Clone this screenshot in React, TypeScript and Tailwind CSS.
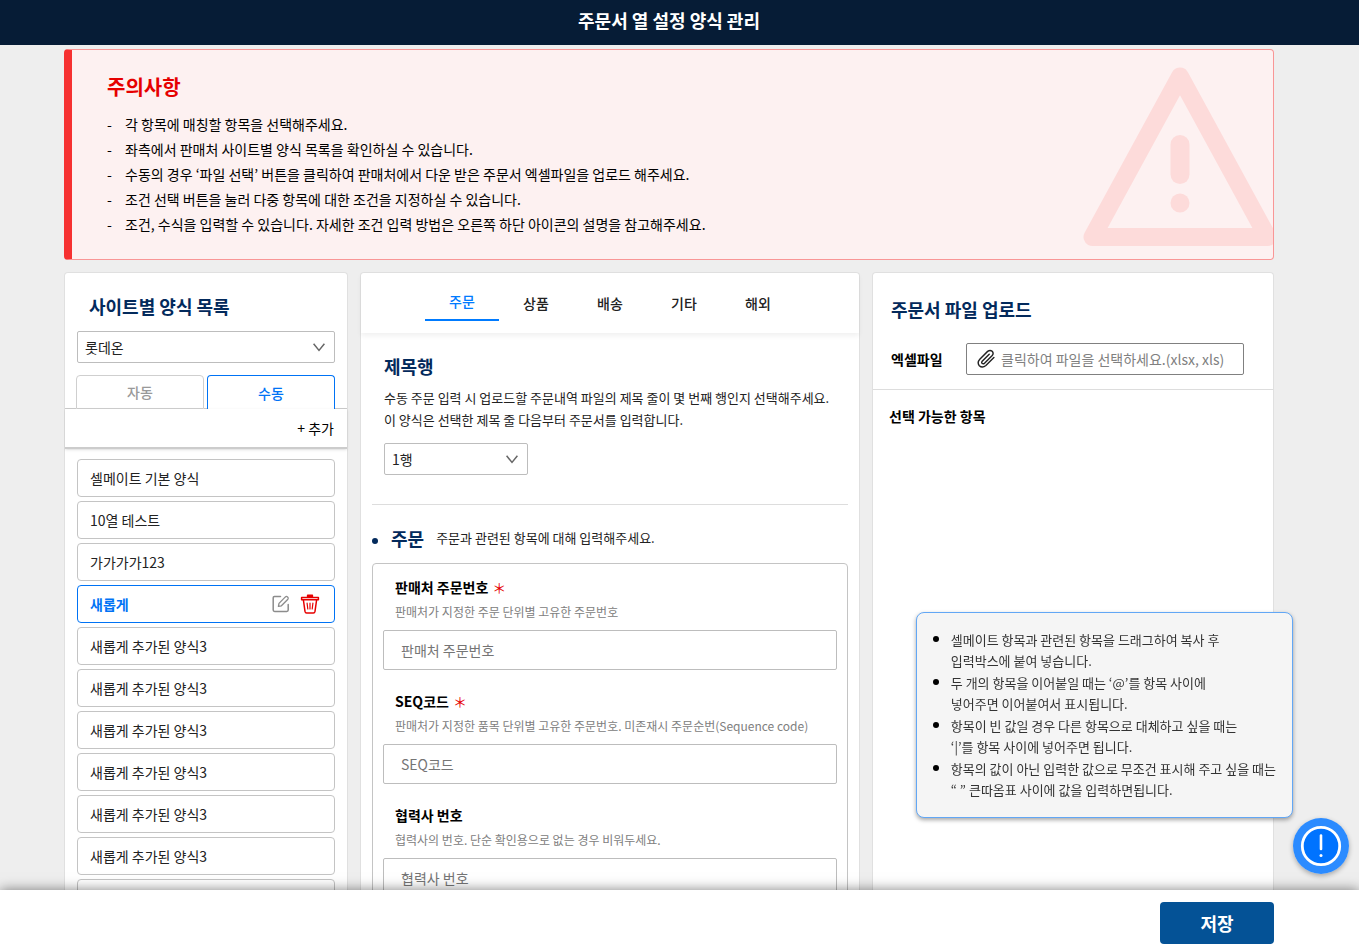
import React from "react";

const notices = [
  "각 항목에 매칭할 항목을 선택해주세요.",
  "좌측에서 판매처 사이트별 양식 목록을 확인하실 수 있습니다.",
  "수동의 경우 ‘파일 선택’ 버튼을 클릭하여 판매처에서 다운 받은 주문서 엑셀파일을 업로드 해주세요.",
  "조건 선택 버튼을 눌러 다중 항목에 대한 조건을 지정하실 수 있습니다.",
  "조건, 수식을 입력할 수 있습니다. 자세한 조건 입력 방법은 오른쪽 하단 아이콘의 설명을 참고해주세요.",
];

const templates = [
  "셀메이트 기본 양식",
  "10열 테스트",
  "가가가가123",
  "새롭게",
  "새롭게 추가된 양식3",
  "새롭게 추가된 양식3",
  "새롭게 추가된 양식3",
  "새롭게 추가된 양식3",
  "새롭게 추가된 양식3",
  "새롭게 추가된 양식3",
  "새롭게 추가된 양식3",
];

const categories = ["주문", "상품", "배송", "기타", "해외"];

const fields = [
  { id: "order-no", label: "판매처 주문번호", required: true, hint: "판매처가 지정한 주문 단위별 고유한 주문번호" },
  { id: "seq", label: "SEQ코드", required: true, hint: "판매처가 지정한 품목 단위별 고유한 주문번호. 미존재시 주문순번(Sequence code)" },
  { id: "partner-no", label: "협력사 번호", required: false, hint: "협력사의 번호. 단순 확인용으로 없는 경우 비워두세요." },
];

const tips = [
  ["셀메이트 항목과 관련된 항목을 드래그하여 복사 후", "입력박스에 붙여 넣습니다."],
  ["두 개의 항목을 이어붙일 때는 ‘@’를 항목 사이에", "넣어주면 이어붙여서 표시됩니다."],
  ["항목이 빈 값일 경우 다른 항목으로 대체하고 싶을 때는", "‘|’를 항목 사이에 넣어주면 됩니다."],
  ["항목의 값이 아닌 입력한 값으로 무조건 표시해 주고 싶을 때는", "“ ” 큰따옴표 사이에 값을 입력하면됩니다."],
];

function WarningIcon() {
  return (
    <svg width="196" height="182" viewBox="0 0 196 182" fill="none" stroke="#fddbda" aria-hidden="true">
      <path d="M98 10.5 L10.5 171 H185.5 Z" strokeWidth="18" strokeLinejoin="round" />
      <path d="M98 78.5 V108.5" strokeWidth="19" strokeLinecap="round" />
      <circle cx="98" cy="137" r="9.5" fill="#fddbda" stroke="none" />
    </svg>
  );
}

function EditIcon() {
  return (
    <svg width="18" height="18" viewBox="0 0 18 18" fill="none" stroke="#8c8c8c" strokeWidth="1.5" strokeLinejoin="round" strokeLinecap="round" aria-hidden="true">
      <path d="M8.5 1.6 H2.4 Q1.2 1.6 1.2 2.8 V15 Q1.2 16.4 2.6 16.4 H14.8 Q16.2 16.4 16.2 15 V9.5" />
      <path d="M6.4 11.4 L7 8.4 L13.4 1.9 Q14.4 1 15.6 1.9 Q16.8 3 15.9 4.2 L9.4 10.8 Z" strokeWidth="1.3" />
    </svg>
  );
}

function TrashIcon() {
  return (
    <svg width="20" height="20" viewBox="0 0 20 20" fill="none" stroke="#e60000" strokeWidth="1.5" strokeLinejoin="round" strokeLinecap="round" aria-hidden="true">
      <path d="M1.6 3.4 H18.4 V5.8 H1.6 Z" />
      <path d="M7.6 3 V1.2 H12.4 V3" fill="#e60000" />
      <path d="M3.4 6 L5 17.4 Q5.3 19 6.6 19 H13.4 Q14.7 19 15 17.4 L16.6 6" />
      <path d="M7.1 9.2 L7.8 15 M10 9.2 V15 M12.9 9.2 L12.2 15" strokeWidth="1.2" />
    </svg>
  );
}

function ClipIcon() {
  return (
    <svg width="20" height="20" viewBox="0 0 20 20" fill="none" stroke="#222222" strokeWidth="1.4" strokeLinecap="round" aria-hidden="true">
      <path d="M13.2 5.2 L6.2 12.2 Q5.2 13.6 6.2 14.5 Q7.3 15.3 8.5 14.2 L16.2 6.5 Q18 4.4 16.2 2.3 Q14.1 0.5 11.6 2.4 L3.8 10.2 Q0.8 13.6 3.3 16.7 Q6.3 19.4 9.9 16.5 L17.9 8.5" />
    </svg>
  );
}

function Dropdown({ label, value }: { label: string; value: string }) {
  return (
    <div className="relative">
      <select
        aria-label={label}
        defaultValue={value}
        className="block h-8 w-full appearance-none rounded-xs border border-[#bdbdbd] bg-white px-[7px] text-sm text-[#222222]"
      >
        <option>{value}</option>
      </select>
      <svg className="pointer-events-none absolute top-3 right-[10px]" width="12" height="9" viewBox="0 0 12 9" fill="none" stroke="#666666" strokeWidth="1.5" aria-hidden="true">
        <path d="M0.6 0.8 L6 7.4 L11.4 0.8" />
      </svg>
    </div>
  );
}

function TemplatePanel() {
  return (
    <aside className="flex w-[284px] shrink-0 flex-col rounded-t border border-b-0 border-[#e0e0e0] bg-white">
      <h2 className="px-6 pt-[18px] pb-[10px] text-lg leading-[30px] font-bold text-[#032a5c]">사이트별 양식 목록</h2>
      <div className="px-3">
        <Dropdown label="판매처 사이트" value="롯데온" />
      </div>
      <div className="mt-3 flex h-[34px] shrink-0 items-stretch">
        <span className="w-[11px] border-b border-[#cccccc]" />
        <button className="flex-1 rounded-t border border-[#cfcfcf] text-sm font-medium text-[#999999]">자동</button>
        <span className="w-[3px] border-b border-[#cccccc]" />
        <button className="flex-1 rounded-t border border-b-0 border-[#0073f5] text-sm font-medium text-[#0073f5]">수동</button>
        <span className="w-3 border-b border-[#cccccc]" />
      </div>
      <div className="flex h-10 shrink-0 items-center justify-end border-b-2 border-[#cccccc] px-[13px] shadow-sm">
        <button className="text-sm text-black">+ 추가</button>
      </div>
      <ul className="flex flex-col gap-1 px-3 pt-[10px]">
        {templates.map((name, i) =>
          i === 3 ? (
            <li key={i} className="flex h-[38px] shrink-0 items-center rounded border border-[#0073f5] pr-[14px]">
              <button className="h-full flex-1 px-3 text-left text-sm font-bold text-[#0073f5]">{name}</button>
              <button aria-label="수정" className="mr-[10px]">
                <EditIcon />
              </button>
              <button aria-label="삭제">
                <TrashIcon />
              </button>
            </li>
          ) : (
            <li key={i} className="flex h-[38px] shrink-0 rounded border border-[#c4c4c4]">
              <button className="flex-1 px-3 text-left text-sm text-[#222222]">{name}</button>
            </li>
          )
        )}
      </ul>
    </aside>
  );
}

function OrderPanel() {
  return (
    <main className="flex min-w-0 flex-1 flex-col rounded-t border border-b-0 border-[#e0e0e0] bg-white">
      <nav className="flex h-[60px] shrink-0 items-center justify-center shadow-[0_3px_5px_rgba(0,0,0,0.06)]">
        {categories.map((name, i) =>
          i === 0 ? (
            <button key={name} className="h-9 w-[74px] border-b-2 border-[#007bff] pb-[2px] text-sm font-medium text-[#007bff]">
              {name}
            </button>
          ) : (
            <button key={name} className="h-9 w-[74px] text-sm font-medium text-[#222222]">
              {name}
            </button>
          )
        )}
      </nav>
      <section className="mx-[11px] border-b border-[#dddddd] px-3 pt-[19px] pb-[29px]">
        <h2 className="text-lg leading-[28px] font-bold text-[#032a5c]">제목행</h2>
        <p className="mt-[7px] text-[13px] leading-[22px] text-[#222222]">
          수동 주문 입력 시 업로드할 주문내역 파일의 제목 줄이 몇 번째 행인지 선택해주세요.
          <br />이 양식은 선택한 제목 줄 다음부터 주문서를 입력합니다.
        </p>
        <div className="mt-3 w-36">
          <Dropdown label="제목행" value="1행" />
        </div>
      </section>
      <section className="mx-[11px] pt-[19px]">
        <div className="flex h-[39px] items-start">
          <span className="mt-[14px] size-[6px] rounded-full bg-[#032a5c]" />
          <h2 className="ml-[13px] text-lg leading-[28px] font-bold text-[#032a5c]">주문</h2>
          <p className="ml-3 text-[13px] leading-[28px] text-[#222222]">주문과 관련된 항목에 대해 입력해주세요.</p>
        </div>
        <div className="rounded-t border border-[#c4c4c4] px-[10px] pt-[11px]">
          {fields.map((f) => (
            <div key={f.id} className="mb-[19px]">
              <label htmlFor={f.id} className="flex items-center gap-1 px-3 pb-px text-sm leading-6 font-bold text-black">
                {f.label}
                {f.required && <span className="font-normal text-[#e60000]">＊</span>}
              </label>
              <p className="px-3 pb-[6px] text-xs leading-6 text-[#808080]">{f.hint}</p>
              <input
                id={f.id}
                placeholder={f.label}
                className="block h-10 w-full rounded-xs border border-[#bdbdbd] px-[17px] text-sm placeholder:text-[#757575]"
              />
            </div>
          ))}
        </div>
      </section>
    </main>
  );
}

function UploadPanel() {
  return (
    <aside className="flex w-[402px] shrink-0 flex-col rounded-t border border-b-0 border-[#e0e0e0] bg-white">
      <div className="border-b border-[#dddddd] px-[18px] pt-[22px] pb-[14px]">
        <h2 className="text-lg leading-[28px] font-bold text-[#032a5c]">주문서 파일 업로드</h2>
        <div className="mt-5 mr-[11px] flex items-center">
          <label htmlFor="excel" className="w-[75px] text-sm font-bold text-black">
            엑셀파일
          </label>
          <div className="flex h-8 flex-1 items-center gap-[5px] rounded-xs border border-[#808080] pl-[9px]">
            <ClipIcon />
            <input
              id="excel"
              readOnly
              placeholder="클릭하여 파일을 선택하세요.(xlsx, xls)"
              className="h-full min-w-0 flex-1 text-sm placeholder:text-[#808080]"
            />
          </div>
        </div>
      </div>
      <h3 className="px-4 pt-[14px] text-sm leading-6 font-bold text-black">선택 가능한 항목</h3>
    </aside>
  );
}

export default function App() {
  return (
    <div className="flex h-screen flex-col overflow-hidden bg-[#eeeeee] font-['Noto_Sans_CJK_KR','Noto_Sans',sans-serif]">
      <header className="flex h-[45px] shrink-0 items-center justify-center bg-[#061c36] pr-[21px] pb-[6px]">
        <h1 className="text-lg leading-[28px] font-bold text-white">주문서 열 설정 양식 관리</h1>
      </header>

      <div className="flex min-h-0 flex-1 flex-col gap-3 overflow-hidden pt-1 pr-[85px] pl-16">
        <section className="relative shrink-0 overflow-hidden rounded border border-l-8 border-[#f99696] border-l-[#f63131] bg-[#fdf1f1] pt-[22px] pr-[200px] pb-[22px] pl-[35px]">
          <h2 className="text-xl leading-[30px] font-bold text-[#e60000]">주의사항</h2>
          <ul className="mt-[10px] text-sm leading-[25px] text-black">
            {notices.map((n) => (
              <li key={n} className="flex">
                <span className="w-[18px] shrink-0">-</span>
                {n}
              </li>
            ))}
          </ul>
          <div className="absolute top-4 -right-[5px]">
            <WarningIcon />
          </div>
        </section>

        <div className="flex min-h-0 flex-1 gap-3 overflow-hidden">
          <TemplatePanel />
          <OrderPanel />
          <UploadPanel />
        </div>
      </div>

      <footer className="relative flex shrink-0 justify-end bg-white pt-3 pr-[85px] pb-[5px] shadow-[0_0_12px_rgba(0,0,0,0.5)]">
        <button className="h-[42px] w-[114px] rounded bg-[#045296] text-lg font-bold text-white">저장</button>
      </footer>

      <div role="note" className="fixed right-[66px] bottom-[131px] rounded-lg border border-[#62a7f5] bg-[#f5f5f5] px-4 pt-4 pb-[17px] shadow-[0_2px_4px_rgba(0,0,0,0.35)]">
        <ul className="flex flex-col gap-px text-[13px] leading-[21px] text-[#333333]">
          {tips.map(([a, b]) => (
            <li key={a} className="flex gap-3">
              <span className="mt-[7px] size-[6px] shrink-0 rounded-full bg-black" />
              <p>
                {a}
                <br />
                {b}
              </p>
            </li>
          ))}
        </ul>
      </div>
      <button aria-label="도움말" className="fixed right-[10px] bottom-[75px] rounded-full shadow-[0_2px_5px_rgba(0,0,0,0.3)]">
        <svg width="56" height="56" viewBox="0 0 56 56" aria-hidden="true">
          <circle cx="28" cy="28" r="28" fill="#2b8bff" />
          <circle cx="28" cy="28" r="18.7" fill="#0073ff" stroke="#ffffff" strokeWidth="2.8" />
          <path d="M28 17.5 V31" stroke="#ffffff" strokeWidth="2.6" strokeLinecap="round" />
          <circle cx="28" cy="37.4" r="1.5" fill="#ffffff" />
        </svg>
      </button>
    </div>
  );
}
